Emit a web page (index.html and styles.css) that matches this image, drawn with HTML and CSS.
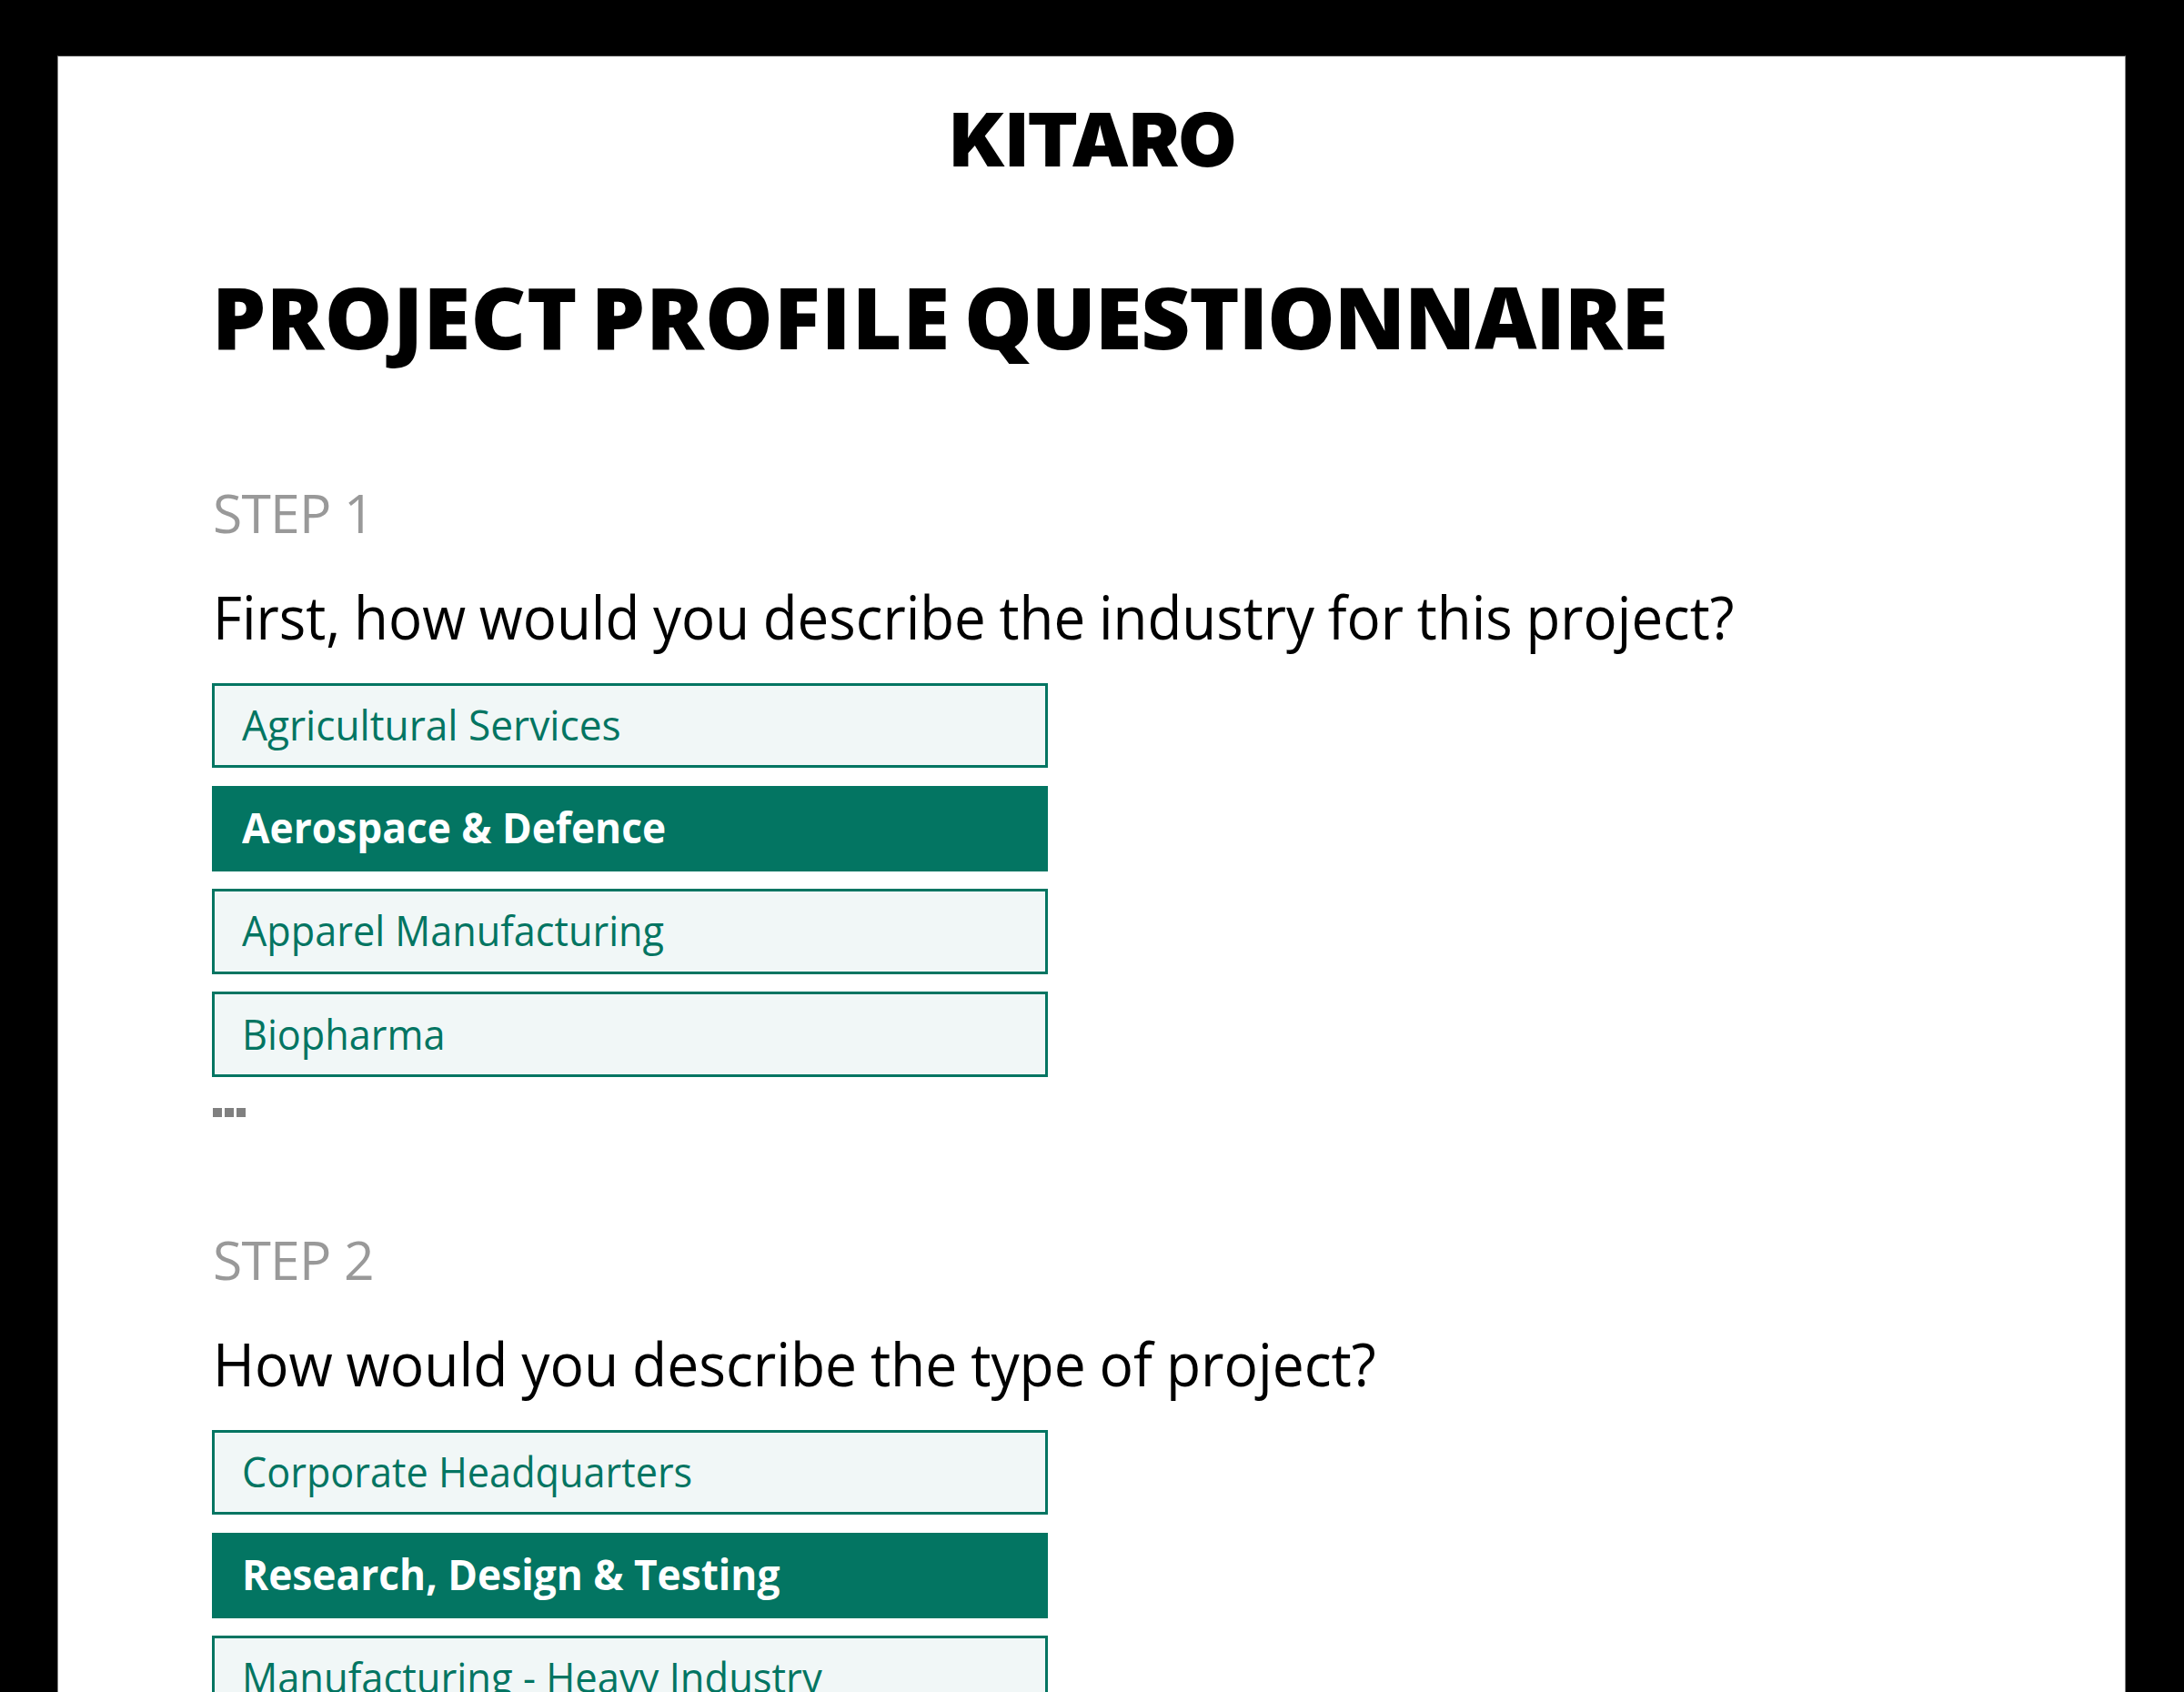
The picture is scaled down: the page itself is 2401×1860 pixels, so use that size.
FILE: index.html
```html
<!DOCTYPE html>
<html lang="en">
<head>
<meta charset="utf-8">
<title>Kitaro – Project Profile Questionnaire</title>
<link rel="stylesheet" href="styles.css">
</head>
<body>
<main class="page">
  <header class="brand">KITARO</header>
  <h1 class="title"><span class="title-project">PROJECT</span> <span class="title-profile">PROFILE</span> <span class="title-questionnaire">QUESTIONNAIRE</span></h1>

  <section class="step">
    <p class="step-label">STEP 1</p>
    <h2 class="question"><span class="condensed condensed-question">First, how would you describe the industry for this project?</span></h2>
    <ul class="options">
      <li class="option"><span class="condensed condensed-slight">Agricultural Services</span></li>
      <li class="option option-selected"><span class="condensed condensed-slight">Aerospace &amp; Defence</span></li>
      <li class="option"><span class="condensed">Apparel Manufacturing</span></li>
      <li class="option"><span class="condensed">Biopharma</span></li>
    </ul>
    <div class="more"><i></i><i></i><i></i></div>
  </section>

  <section class="step">
    <p class="step-label">STEP 2</p>
    <h2 class="question"><span class="condensed condensed-short">How would you describe the type of project?</span></h2>
    <ul class="options">
      <li class="option"><span class="condensed">Corporate Headquarters</span></li>
      <li class="option option-selected"><span class="condensed condensed-slight">Research, Design &amp; Testing</span></li>
      <li class="option"><span class="condensed condensed-long">Manufacturing - Heavy Industry</span></li>
    </ul>
  </section>
</main>
</body>
</html>
```
FILE: styles.css
```css
* { box-sizing: border-box; margin: 0; padding: 0; }

body {
  height: 1860px;
  padding: 61px 64px 0 63px;
  overflow: hidden;
  background: #000;
  color: #000;
  font-family: "Open Sans", sans-serif;
}

.page {
  height: 1799px;
  padding: 51.6px 169px 0;
  overflow: hidden;
  background: #fff;
  border: 1px solid #808080;
  border-top-color: #3c3c3c;
  border-bottom: 0;
}

.brand {
  height: 80px;
  font-family: "Inter", sans-serif;
  font-size: 81.6px;
  font-weight: 900;
  line-height: 80px;
  letter-spacing: -0.45px;
  text-align: center;
  padding-left: 3px;
}

.title {
  margin-top: 104px;
  font-size: 94px;
  font-weight: 800;
  line-height: 100px;
  word-spacing: -9.5px;
  white-space: nowrap;
}
.title-project { letter-spacing: 0.4px; }
.title-profile { letter-spacing: 1.1px; }
.title-questionnaire { letter-spacing: -1.2px; }

.step { height: 821px; }
.title + .step { margin-top: 135.4px; }

.step-label {
  padding-left: 1px;
  color: #999;
  font-size: 58.8px;
  line-height: 60px;
  letter-spacing: -0.8px;
}

.question {
  margin-top: 45px;
  padding-left: 1px;
  font-size: 65.4px;
  font-weight: 400;
  line-height: 80px;
  white-space: nowrap;
}

.condensed {
  display: inline-block;
  transform: scaleX(0.936);
  transform-origin: left;
}
.condensed-slight { transform: scaleX(0.958); }
.condensed-long { transform: scaleX(0.942); }
.condensed-question {
  transform: scaleX(0.9455);
  word-spacing: -1.4px;
}
.condensed-short {
  transform: scaleX(0.953);
  word-spacing: -1.4px;
}

.options {
  display: grid;
  gap: 19.6px;
  width: 919.4px;
  margin-top: 32.6px;
  list-style: none;
}

.option {
  display: flex;
  align-items: center;
  height: 93.7px;
  padding: 0 30px 1px;
  border: 3px solid #037562;
  background: #f1f7f7;
  color: #037562;
  font-size: 46.2px;
  line-height: 60px;
  white-space: nowrap;
}
.option-selected {
  background: #037562;
  color: #fff;
  font-weight: 700;
}

.more {
  display: flex;
  gap: 3px;
  margin: 33.5px 0 0 1px;
}
.more i {
  width: 10px;
  height: 10px;
  background: #808080;
}
```
